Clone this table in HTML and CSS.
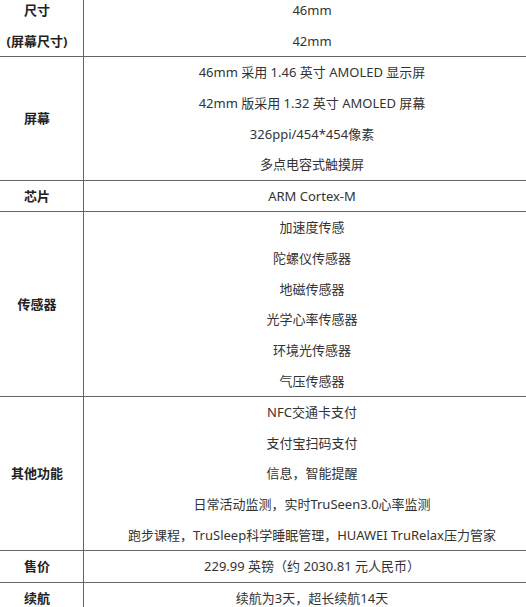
FILE: index.html
```html
<!DOCTYPE html>
<html lang="zh-CN">
<head>
<meta charset="utf-8">
<title>规格</title>
<link rel="stylesheet" href="styles.css">
</head>
<body>
<table class="spec">
  <tbody>
    <tr>
      <th><p>尺寸</p><p>(屏幕尺寸)</p></th>
      <td><p>46mm</p><p>42mm</p></td>
    </tr>
    <tr>
      <th><p>屏幕</p></th>
      <td>
        <p>46mm 采用 1.46 英寸 AMOLED 显示屏</p>
        <p>42mm 版采用 1.32 英寸 AMOLED 屏幕</p>
        <p>326ppi/454*454像素</p>
        <p>多点电容式触摸屏</p>
      </td>
    </tr>
    <tr>
      <th><p>芯片</p></th>
      <td><p>ARM Cortex-M</p></td>
    </tr>
    <tr>
      <th><p>传感器</p></th>
      <td>
        <p>加速度传感</p>
        <p>陀螺仪传感器</p>
        <p>地磁传感器</p>
        <p>光学心率传感器</p>
        <p>环境光传感器</p>
        <p>气压传感器</p>
      </td>
    </tr>
    <tr>
      <th><p>其他功能</p></th>
      <td>
        <p>NFC交通卡支付</p>
        <p>支付宝扫码支付</p>
        <p>信息，智能提醒</p>
        <p>日常活动监测，实时TruSeen3.0心率监测</p>
        <p>跑步课程，TruSleep科学睡眠管理，HUAWEI TruRelax压力管家</p>
      </td>
    </tr>
    <tr>
      <th><p>售价</p></th>
      <td><p>229.99 英镑（约 2030.81 元人民币）</p></td>
    </tr>
    <tr>
      <th><p>续航</p></th>
      <td><p>续航为3天，超长续航14天</p></td>
    </tr>
  </tbody>
</table>
</body>
</html>
```

FILE: styles.css
```css
html, body {
  margin: 0;
  padding: 0;
  background: #ffffff;
  overflow: hidden;
}

body {
  font-family: "Noto Sans", "Noto Sans CJK SC", sans-serif;
  font-size: 13px;
  color: #333333;
}

.spec {
  border-collapse: collapse;
  width: 551px;
  margin: -6px 0 0 -10px;
  table-layout: fixed;
}

.spec th,
.spec td {
  border: 1px solid #666666;
  padding: 0;
  text-align: center;
  vertical-align: middle;
}

.spec th {
  width: 92px;
  font-weight: bold;
  color: #222222;
}

.spec p {
  margin: 0;
  line-height: 30.62px;
  white-space: nowrap;
}
```
